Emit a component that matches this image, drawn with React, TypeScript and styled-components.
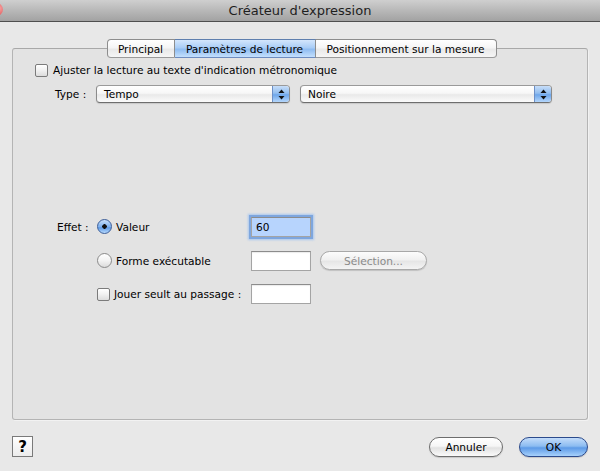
import React from 'react'
import styled, { createGlobalStyle } from 'styled-components'

const GlobalStyle = createGlobalStyle`
	html, body {
		margin: 0;
		padding: 0;
		background: #e8e8e8;
	}
	* {
		box-sizing: border-box;
	}
`

const Window = styled.div`
	width: 600px;
	height: 471px;
	background: #e8e8e8;
	font-family: 'Lucida Grande', 'DejaVu Sans', Verdana, sans-serif;
	font-size: 10.6px;
	color: #000;
	display: flex;
	flex-direction: column;
	overflow: hidden;
`

const TitleBar = styled.div`
	height: 22px;
	display: flex;
	align-items: center;
	background: linear-gradient(#cfcfcf, #b8b8b8 50%, #a2a2a2);
	border-bottom: 1px solid #4f4f4f;
	position: relative;
`

const CloseDot = styled.div`
	position: absolute;
	left: -10px;
	top: 3px;
	width: 13px;
	height: 13px;
	border-radius: 50%;
	background: radial-gradient(circle at 70% 40%, #f9a0a0, #d23c3c);
`

const Title = styled.div`
	flex: 1;
	text-align: center;
	font-size: 13px;
	color: #1e1e1e;
`

const Body = styled.div`
	flex: 1;
	display: flex;
	flex-direction: column;
	padding: 17px 12px 0 12px;
`

const TabStrip = styled.div`
	display: flex;
	justify-content: center;
	margin-bottom: -10px;
	position: relative;
	z-index: 1;
	padding-left: 3px;
`

const Tab = styled.div<{ $w: number; $active?: boolean; $first?: boolean; $last?: boolean }>`
	width: ${p => p.$w}px;
	height: 19px;
	display: flex;
	align-items: center;
	justify-content: center;
	border: 1px solid #8d8d8d;
	border-left: ${p => (p.$first ? '1px solid #8d8d8d' : 'none')};
	border-radius: ${p => (p.$first ? '4px 0 0 4px' : p.$last ? '0 4px 4px 0' : '0')};
	background: ${p =>
		p.$active
			? 'linear-gradient(#d3e6fc, #a9cdf6 45%, #8fbcf1 55%, #c4e0fd)'
			: 'linear-gradient(#ffffff, #f5f5f5 45%, #e9e9e9 55%, #f6f6f6)'};
	border-top-color: ${p => (p.$active ? '#5f7fae' : '#8d8d8d')};
	border-bottom-color: ${p => (p.$active ? '#6d8cc0' : '#9a9a9a')};
	white-space: nowrap;
`

const Panel = styled.div`
	height: 372px;
	border: 1px solid #b4b4b4;
	border-top-color: #a8a8a8;
	border-radius: 3px;
	background: #e3e3e3;
	box-shadow: 1px 1px 0 #f2f2f2;
	padding: 14px 0 0 22px;
	display: flex;
	flex-direction: column;
`

const CheckRow = styled.label`
	display: flex;
	align-items: center;
	gap: 5px;
	height: 14px;
`

const CheckBox = styled.span`
	width: 13px;
	height: 13px;
	border: 1px solid #7b7b7b;
	border-radius: 2px;
	background: linear-gradient(#ffffff, #f0f0f0 50%, #dcdcdc);
	box-shadow: inset 0 1px 1px rgba(255, 255, 255, 0.9);
	flex-shrink: 0;
`

const TypeRow = styled.div`
	display: flex;
	align-items: center;
	margin-top: 8px;
	padding-left: 20px;
	height: 18px;
`

const Label = styled.span<{ $w: number }>`
	width: ${p => p.$w}px;
	flex-shrink: 0;
`

const Select = styled.div<{ $w: number; $ml?: number }>`
	width: ${p => p.$w}px;
	margin-left: ${p => p.$ml || 0}px;
	height: 18px;
	border: 1px solid #8b8b8b;
	border-top-color: #9a9a9a;
	border-bottom-color: #6e6e6e;
	border-radius: 4px;
	display: flex;
	align-items: center;
	overflow: hidden;
	background: linear-gradient(#ffffff, #f7f7f7 45%, #e9e9e9 55%, #fbfbfb);
	box-shadow: 0 1px 1px rgba(0, 0, 0, 0.12);
`

const SelectText = styled.span`
	flex: 1;
	padding-left: 7px;
`

const Stepper = styled.span`
	width: 17px;
	height: 100%;
	border-left: 1px solid #6c8fc6;
	background: linear-gradient(#c7def9, #92bdef 45%, #6ea6ea 55%, #b4d6fb);
	display: flex;
	align-items: center;
	justify-content: center;
`

const EffectGrid = styled.div`
	display: grid;
	grid-template-columns: 40px 154px 60px 107px;
	grid-template-rows: 21px 21px 20px;
	row-gap: 13px;
	margin-top: 113px;
	margin-left: 22px;
	align-items: center;
	white-space: nowrap;
`

const Option = styled.label`
	display: flex;
	align-items: center;
	gap: 4px;
`

const Radio = styled.span<{ $on?: boolean }>`
	width: 15px;
	height: 15px;
	border-radius: 50%;
	border: 1px solid ${p => (p.$on ? '#3b5d98' : '#8a8a8a')};
	background: ${p =>
		p.$on
			? 'radial-gradient(circle, #111 0 2px, transparent 2.5px), linear-gradient(#c9e0fb, #7fb1ee 50%, #5f9be6 60%, #b7d9fd)'
			: 'linear-gradient(#ffffff, #f3f3f3 50%, #dcdcdc)'};
	flex-shrink: 0;
`

const TextField = styled.div<{ $focus?: boolean }>`
	width: 60px;
	height: 20px;
	border: 1px solid #a4a4a4;
	border-top-color: #8c8c8c;
	background: ${p => (p.$focus ? '#b7d4fd' : '#fff')};
	box-shadow: ${p => (p.$focus ? '0 0 0 2px #7ea6de, 0 0 2px 3px #a9c7ef' : 'inset 0 1px 1px rgba(0,0,0,0.08)')};
	padding: 3px 0 0 4px;
`

const PillButton = styled.div<{ $w: number; $disabled?: boolean; $primary?: boolean }>`
	width: ${p => p.$w}px;
	height: 20px;
	border-radius: 10px;
	display: flex;
	align-items: center;
	justify-content: center;
	color: ${p => (p.$disabled ? '#8a8a8a' : '#000')};
	border: 1px solid ${p => (p.$primary ? '#2b4a8c' : p.$disabled ? '#a8a8a8' : '#6d6d6d')};
	background: ${p =>
		p.$primary
			? 'linear-gradient(#c3dcfa, #8cbcf1 45%, #5d9ae7 55%, #a7d1fb)'
			: p.$disabled
				? 'linear-gradient(#fcfcfc, #f1f1f1 45%, #e6e6e6 55%, #f4f4f4)'
				: 'linear-gradient(#ffffff, #f6f6f6 45%, #e2e2e2 55%, #fafafa)'};
	box-shadow: 0 1px 1px rgba(0, 0, 0, 0.15);
`

const SelectionButton = styled(PillButton)`
	margin-left: 9px;
	height: 19px;
`

const Footer = styled.div`
	display: flex;
	align-items: center;
	margin-top: 16px;
	gap: 16px;
`

const HelpButton = styled.div`
	width: 21px;
	height: 21px;
	border: 1px solid #7a7a7a;
	background: linear-gradient(#ffffff, #ececec);
	display: flex;
	align-items: center;
	justify-content: center;
	font-size: 15px;
	font-weight: bold;
	margin-right: auto;
`

const Arrows = () => (
	<svg width="7" height="11" viewBox="0 0 7 11">
		<path d="M3.5 0.5 L6.5 4 L0.5 4 Z" fill="#111" />
		<path d="M3.5 10.5 L6.5 7 L0.5 7 Z" fill="#111" />
	</svg>
)

const App: React.FC = () => {
	return (
		<>
			<GlobalStyle />
			<Window>
				<TitleBar>
					<CloseDot />
					<Title>Créateur d'expression</Title>
				</TitleBar>
				<Body>
					<TabStrip>
						<Tab $w={68} $first>
							Principal
						</Tab>
						<Tab $w={141} $active>
							Paramètres de lecture
						</Tab>
						<Tab $w={181} $last>
							Positionnement sur la mesure
						</Tab>
					</TabStrip>
					<Panel>
						<CheckRow>
							<CheckBox />
							Ajuster la lecture au texte d'indication métronomique
						</CheckRow>
						<TypeRow>
							<Label $w={41}>Type :</Label>
							<Select $w={194}>
								<SelectText>Tempo</SelectText>
								<Stepper>
									<Arrows />
								</Stepper>
							</Select>
							<Select $w={252} $ml={10}>
								<SelectText>Noire</SelectText>
								<Stepper>
									<Arrows />
								</Stepper>
							</Select>
						</TypeRow>
						<EffectGrid>
							<span>Effet :</span>
							<Option>
								<Radio $on />
								Valeur
							</Option>
							<TextField $focus>60</TextField>
							<span />

							<span />
							<Option>
								<Radio />
								Forme exécutable
							</Option>
							<TextField />
							<SelectionButton $w={107} $disabled>
								Sélection...
							</SelectionButton>

							<span />
							<Option>
								<CheckBox />
								Jouer seult au passage :
							</Option>
							<TextField />
							<span />
						</EffectGrid>
					</Panel>
					<Footer>
						<HelpButton>?</HelpButton>
						<PillButton $w={74}>Annuler</PillButton>
						<PillButton $w={69} $primary>
							OK
						</PillButton>
					</Footer>
				</Body>
			</Window>
		</>
	)
}

export default App
